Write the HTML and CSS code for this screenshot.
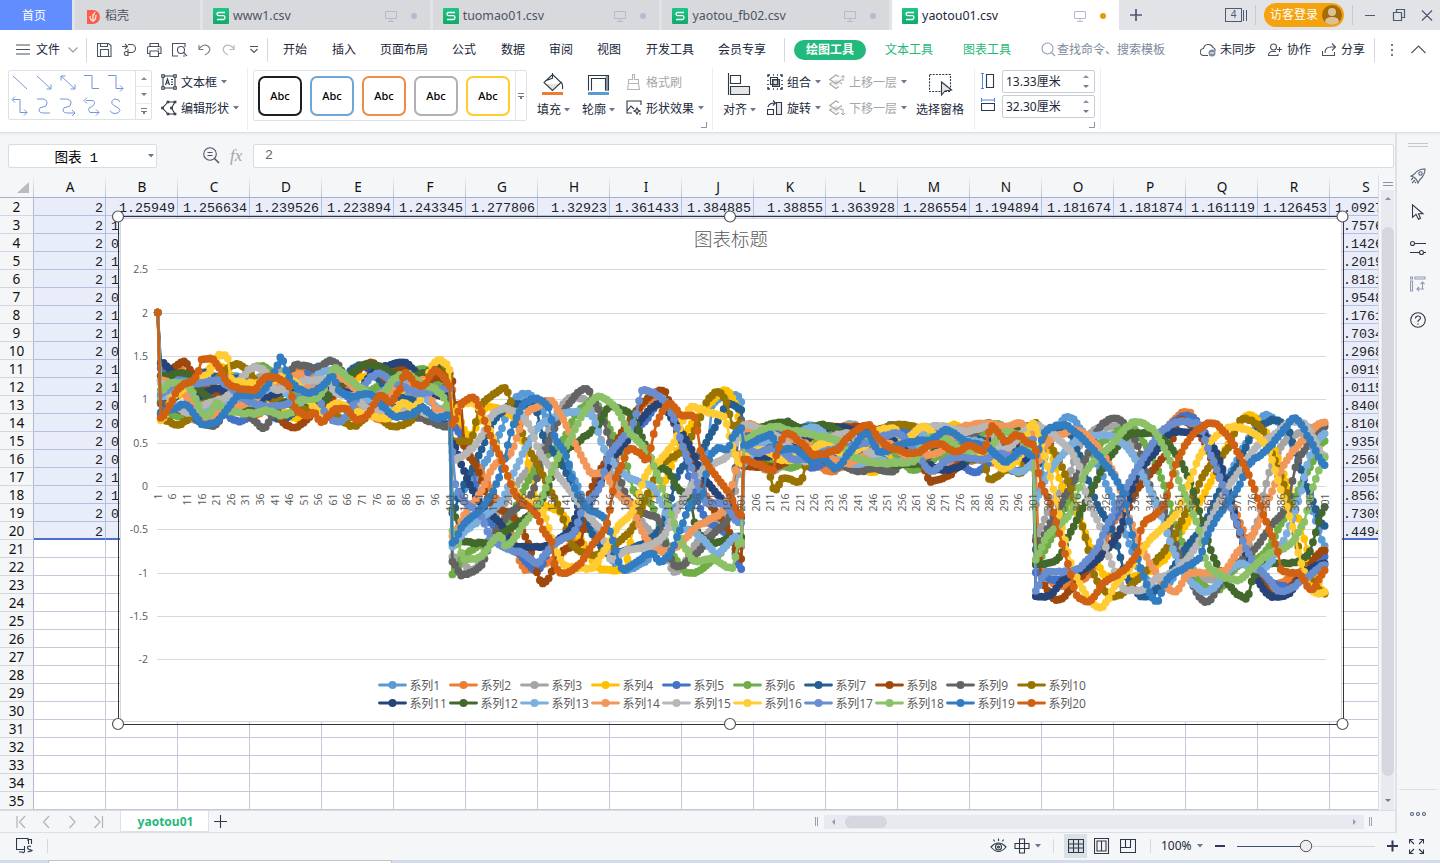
FILE: index.html
```html
<!DOCTYPE html>
<html lang="zh-CN">
<head>
<meta charset="utf-8">
<title>yaotou01.csv</title>
<link rel="stylesheet" href="styles.css">
</head>
<body>
<svg class="defs" width="0" height="0">
  <defs>
    <linearGradient id="g" x1="0" y1="0" x2="0" y2="1"><stop offset="0" stop-color="#1fc588"/><stop offset="1" stop-color="#12a968"/></linearGradient>
    <symbol id="sheet" viewBox="0 0 16 16"><rect width="16" height="16" rx="1" fill="url(#g)"/><path d="M12 4.500H5.500Q4 4.500 4 6t1.500 1.700h5Q12 7.800 12 9.500T10.500 11.500H4" fill="none" stroke="#fff" stroke-width="1.300"/></symbol>
    <symbol id="screen" viewBox="0 0 12 12"><path d="M.5 1.500h11v7H.5zM6 8.500v3M3 11.500h6" fill="none" stroke="#b4bbcf"/></symbol>
    <symbol id="down" viewBox="0 0 6 4"><path d="M0 0h6L3 3.500z" fill="#6b778e"/></symbol>
    <symbol id="layers" viewBox="0 0 16 16"><path d="M7 5.500l5 3L7 12 2 8.500z" fill="#e2e2e2"/><path d="M10 2.800L7 1 .8 5.500 7 9.500l6-4M2.500 8.500L.8 10 7 14.500l3-2M11.500 8.500L13 10" fill="none" stroke="#a9a9a9" stroke-width="1.200"/></symbol>
  </defs>
</svg>

<header class="tabbar">
  <div class="tab home">首页</div>
  <div class="tab shell"><svg width="13" height="15" viewBox="0 0 13 15"><path d="M0 1h6a6.500 6.500 0 0 1 0 14H0z" fill="#f9604c"/><path d="M6 13V5M6 12C3 11 3 9 3 7M6 12c3-1 3-4 3-6M6 7l2-4" stroke="#ffe5de" stroke-width="1.300" fill="none"/></svg>稻壳</div>
  <div class="tab doc"><svg class="s16"><use href="#sheet"/></svg><span>www1.csv</span><svg class="s12"><use href="#screen"/></svg><i class="dot"></i></div>
  <div class="tab doc"><svg class="s16"><use href="#sheet"/></svg><span>tuomao01.csv</span><svg class="s12"><use href="#screen"/></svg><i class="dot"></i></div>
  <div class="tab doc"><svg class="s16"><use href="#sheet"/></svg><span>yaotou_fb02.csv</span><svg class="s12"><use href="#screen"/></svg><i class="dot"></i></div>
  <div class="tab doc active"><svg class="s16"><use href="#sheet"/></svg><span>yaotou01.csv</span><svg class="s12"><use href="#screen"/></svg><i class="dot"></i></div>
  <svg class="newtab" width="12" height="12" viewBox="0 0 12 12"><path d="M6 0v12M0 6h12" stroke="#4d5a75" stroke-width="1.700"/></svg>
  <div class="winctl">
    <div class="count">4</div><i class="bars"></i><i class="vsep"></i>
    <div class="login"><span>访客登录</span><svg width="20" height="20" viewBox="0 0 20 20"><circle cx="10" cy="10" r="10" fill="#a36b09"/><circle cx="10" cy="7" r="4" fill="#dcc193"/><path d="M3 17q0-5 7-5t7 5q-3 3-7 3t-7-3z" fill="#dcc193"/></svg></div><i class="vsep"></i>
    <svg width="70" height="14" viewBox="0 0 70 14" fill="none" stroke="#4d5a75" stroke-width="1.200"><path d="M0 7.500h10M28.500 4.500h8v8h-8zM31.500 4.500v-3h8v8h-3M57 2.500l10 10M67 2.500l-10 10"/></svg>
  </div>
</header>

<nav class="menu">
  <svg width="14" height="11" viewBox="0 0 14 11" class="ic"><path d="M0 1h14M0 5.500h14M0 10h14"/></svg>
  <span>文件</span>
  <svg width="10" height="6" viewBox="0 0 10 6" class="ic lt"><path d="M.5.5L5 5 9.500.5"/></svg>
  <i class="vsep"></i>
  <svg width="15" height="14" viewBox="0 0 15 14" class="ic"><path d="M.5.500h11l2.500 2v11H.500zM3.500.500v3h7v-3M3.500 13.500v-7h8v7"/></svg>
  <svg width="15" height="14" viewBox="0 0 15 14" class="ic"><path d="M0 3.500h5M3 1l2.500 2.500L3 6M6 1.500h3.500a4 4 0 0 1 0 8H6M6 9.500a2 2 0 1 0-2 3h2V6"/></svg>
  <svg width="15" height="14" viewBox="0 0 15 14" class="ic"><path d="M3 3.500v-3h8.500v3M3 10.500H.5V5Q.5 3.500 2 3.500h10.500Q14 3.500 14 5v5.500h-2.500M3 8h8.500v5.500H3zM10.500 6h2"/></svg>
  <svg width="16" height="14" viewBox="0 0 16 14" class="ic"><path d="M6 13H.5V.5H13V4"/><circle cx="9" cy="7" r="3.500"/><path d="M11.500 9.500l3.500 3.500M11 13h2"/></svg>
  <svg width="13" height="12" viewBox="0 0 13 12" class="ic md"><path d="M1 1v4.500h4.500M1 5C4 1 8 0 10.500 2.500s1.500 6-3.500 8.500"/></svg>
  <svg width="13" height="12" viewBox="0 0 13 12" class="ic vl"><path d="M12 1v4.500H7.500M12 5C9 1 5 0 2.500 2.500S1 8.500 6 11"/></svg>
  <svg width="9" height="8" viewBox="0 0 9 8" class="ic"><path d="M1 .5h8M1.500 3L5 6.500 8.500 3"/></svg>
  <i class="vsep"></i>
  <span>开始</span><span>插入</span><span>页面布局</span><span>公式</span><span>数据</span><span>审阅</span><span>视图</span><span>开发工具</span><span>会员专享</span>
  <i class="vsep"></i>
  <span class="pill">绘图工具</span><span class="green">文本工具</span><span class="green">图表工具</span>
  <svg width="15" height="15" viewBox="0 0 15 15" class="ic gr"><circle cx="6.500" cy="6.500" r="5.500"/><path d="M10.500 10.500L14 14"/></svg>
  <span class="hint">查找命令、搜索模板</span>
  <svg width="17" height="14" viewBox="0 0 17 14" class="ic"><path d="M8 12.500H4A3.500 3.500 0 0 1 3.500 5.500 5 5 0 0 1 13 4.500 3 3 0 0 1 15 8"/><circle cx="12" cy="10" r="3.500" fill="#7f8ba3" stroke="none"/><path d="M10 10h4" stroke="#fff"/></svg>
  <span>未同步</span>
  <svg width="15" height="14" viewBox="0 0 15 14" class="ic"><circle cx="5.500" cy="4" r="3"/><path d="M8 8.500H3.500Q.5 9 .5 12.500h9.500V11M9 6.500h5M11.500 4v5"/></svg>
  <span>协作</span>
  <svg width="15" height="14" viewBox="0 0 15 14" class="ic"><path d="M.5 8v4.500h12V9M3 10Q3 4 9 4h4M10 .5L13.500 4 10 7.500"/></svg>
  <span>分享</span>
  <i class="vsep"></i>
  <svg width="4" height="14" viewBox="0 0 4 14"><path d="M1 1h2v2H1zM1 6h2v2H1zM1 11h2v2H1z" fill="#6f7785"/></svg>
  <svg width="15" height="9" viewBox="0 0 15 9" class="ic"><path d="M.5 8L7.500 1l7 7"/></svg>
</nav>

<section class="ribbon">
  <div class="shapes">
    <svg width="126" height="48" viewBox="0 0 126 48" fill="none" stroke="#7396d8">
      <path d="M4 5l14 13M28 5l14 13M42 13.500V18h-4.500M52 5l14 13M52 9.500V5h4.500M66 13.500V18h-4.500M75 4.500h8v13h7M99 4.500h8v13h7M111 14.500l3 3-3 3M4 28.500h7v13h7M6 25.500l-3 3 3 3M15 38.500l3 3-3 3M28 28h5q5 0 5 4t-4 4-4 3 5 3h6M51 28h5q6 0 6 4t-4 4-4 3 5 3h7M63 39l3 3-3 3M77 29.500h5q5 0 3 4-1 2-4 3t0 5h9M78 26.500l-3 3 3 3M87 38.500l3 3-3 3M111 31q-1-3-5-3-4 1-3 4.500 1 2 4 3 4 2 4 4-1 3-5 3t-5-3"/>
    </svg>
    <div class="spin3"><i><b class="up"></b></i><i><b class="dn"></b></i><i><b class="dn bar"></b></i></div>
  </div>
  <div class="pair">
    <div><svg width="16" height="16" viewBox="0 0 16 16" class="ic dk"><path d="M2 2h12v12H2z"/><path d="M4.500 11L6.500 5l2 6M5 9h3M10 5.500h2M10 8h2M10 10.500h2"/><path d="M.8.800h2.400v2.400H.8zM12.800.800h2.400v2.400h-2.400zM.8 12.800h2.400v2.400H.8zM12.800 12.800h2.400v2.400h-2.400z" fill="#fff"/></svg><span>文本框</span><svg class="dd"><use href="#down"/></svg></div>
    <div><svg width="16" height="16" viewBox="0 0 16 16" class="ic dk"><path d="M7 2h7l-3.500 6 3.500 6H7L1.500 8z"/><path d="M6.200 1.200h1.600v1.600H6.200zM13.200 1.200h1.600v1.600h-1.600zM.7 7.200h1.600v1.600H.7zM9.700 7.200h1.600v1.600H9.700zM6.200 13.200h1.600v1.600H6.200zM13.200 13.200h1.600v1.600h-1.600z" fill="#fff"/></svg><span>编辑形状</span><svg class="dd"><use href="#down"/></svg></div>
  </div>
  <i class="gsep"></i>
  <div class="styles">
    <b class="k1">Abc</b><b class="k2">Abc</b><b class="k3">Abc</b><b class="k4">Abc</b><b class="k5">Abc</b>
    <div class="more"><i class="dn bar"></i></div>
  </div>
  <div class="big"><svg width="24" height="25" viewBox="0 0 24 25" class="ic dk"><path d="M4 12h15l-8 7z" fill="#e3e3e3" stroke="none"/><path d="M11.500 2.500l8.500 8-8.500 8-8.500-8zM11.500 1v5M4 9l8-3M20 10q2 2 1.500 7"/><path d="M1 21.500h21" stroke="#ee7c30" stroke-width="3"/></svg><span>填充<svg class="dd"><use href="#down"/></svg></span></div>
  <div class="big"><svg width="24" height="25" viewBox="0 0 24 25" class="ic dk"><path d="M19.500 3h3v16h-3z" fill="#9097a8" stroke="none"/><path d="M2.500 18.500v-15h20v15M5.500 18.500v-12h14v12"/><path d="M2 21.500h21" stroke="#5b9bd5" stroke-width="3"/></svg><span>轮廓<svg class="dd"><use href="#down"/></svg></span></div>
  <div class="pair">
    <div class="off"><svg width="16" height="16" viewBox="0 0 16 16" class="ic vl"><path d="M6.500.5h2v5h4v4H2.500v-4h4zM2.500 9.500L1.500 15.500h12l-1-6"/></svg><span>格式刷</span></div>
    <div><svg width="16" height="16" viewBox="0 0 16 16" class="ic dk"><path d="M15 5V1H1v12h5M1 11l4-5 3 3"/><path d="M11 8l1 2 2 1-2 1-1 2-1-2-2-1 2-1zM14 13v2"/></svg><span>形状效果</span><svg class="dd"><use href="#down"/></svg></div>
    <svg class="corner" width="6" height="6"><path d="M0 5.500h5.500V0" fill="none" stroke="#8c94a4"/></svg>
  </div>
  <i class="gsep"></i>
  <div class="big"><svg width="24" height="25" viewBox="0 0 24 25" class="ic dk"><path d="M1.500 1v22M3.500 3.500h10v8h-10z"/><path d="M3.500 14.500h19v8h-19z" fill="#e6e6e6"/></svg><span>对齐<svg class="dd"><use href="#down"/></svg></span></div>
  <div class="pair">
    <div><svg width="16" height="16" viewBox="0 0 16 16" class="ic dk"><path d="M6 6h5v5H6z" fill="#dedede"/><path d="M3.500 3.500h7v7h-7zM5.500 5.500h7v7h-7z"/><path d="M1 3V1h2M13 1h2v2M15 13v2h-2M3 15H1v-2M6 1h1M10 1h1M1 6v1M1 10v1M15 6v1M15 10v1M6 15h1M10 15h1" stroke-width="1.500"/></svg><span>组合</span><svg class="dd"><use href="#down"/></svg></div>
    <div><svg width="16" height="16" viewBox="0 0 16 16" class="ic dk"><path d="M9.500 2.500h5v12h-5z" fill="#e6e6e6"/><path d="M.5 9.500h6v5h-6zM1 7Q2 3 8 3M6 .5L8.500 3 6 5.500"/></svg><span>旋转</span><svg class="dd"><use href="#down"/></svg></div>
  </div>
  <div class="pair off">
    <div><svg width="16" height="16"><use href="#layers"/><path d="M14 7V1.500M12 3.500l2-2 2 2" stroke="#a9a9a9" fill="none"/></svg><span>上移一层</span><svg class="dd"><use href="#down"/></svg></div>
    <div><svg width="16" height="16"><use href="#layers"/><path d="M14 9v6M12 13l2 2 2-2" stroke="#a9a9a9" fill="none"/></svg><span>下移一层</span><svg class="dd"><use href="#down"/></svg></div>
  </div>
  <div class="big sel"><svg width="24" height="25" viewBox="0 0 24 25" class="ic dk"><path d="M.5 2.500h21v17H.500z" stroke-dasharray="2 1.200"/><path d="M12.500 10v13l3.500-4 6.500-1z" fill="#e6e6e6"/></svg><span>选择窗格</span></div>
  <i class="gsep"></i>
  <div class="sizes">
    <svg width="14" height="16" viewBox="0 0 14 16"><path d="M1.500 1v14M0 .5h3M0 15.500h3" stroke="#4a86f0" fill="none"/><path d="M5.500 1.500h7v13h-7z" class="ic dk"/></svg>
    <svg width="14" height="14" viewBox="0 0 14 14"><path d="M0 2h14M.5 0v4M13.500 0v4" stroke="#4a86f0" fill="none"/><path d="M.5 5.500h13v7H.500z" class="ic dk"/></svg>
  </div>
  <div class="inputs">
    <div>13.33厘米<span><b class="up"></b><b class="dn"></b></span></div>
    <div>32.30厘米<span><b class="up"></b><b class="dn"></b></span></div>
    <svg class="corner" width="6" height="6"><path d="M0 5.500h5.500V0" fill="none" stroke="#8c94a4"/></svg>
  </div>
  <i class="gsep"></i>
</section>

<div class="work">
  <main>
    <div class="fbar">
      <div class="name"><span>图表 1</span><svg class="dd"><use href="#down"/></svg></div>
      <svg width="17" height="17" viewBox="0 0 17 17" class="ic"><circle cx="7" cy="7" r="6.300"/><path d="M11.500 11.500L16 16" stroke-width="1.500"/><path d="M4.500 5.500h5M4.500 8.500h5"/></svg>
      <em>fx</em>
      <div class="formula">2</div>
    </div>
    <div class="sheetwrap">
      <div class="sheet" id="sheetgrid"></div>
      <div class="vscroll"><i class="split"></i><div class="track"><b class="up"></b><i class="thumb"></i><b class="dn"></b></div></div>
      <svg class="chart" id="chart" width="1240" height="522" viewBox="110 208 1240 522"></svg>
    </div>
    <div class="tabs">
      <svg width="90" height="14" viewBox="0 0 90 14" fill="none" stroke="#b0b3b9" stroke-width="1.200"><path d="M1 1v12M9 1L3.500 7 9 13M33 1l-5.500 6L33 13M53.500 1L59 7l-5.500 6M78.500 1L84 7l-5.500 6M86.500 1v12"/></svg>
      <div class="stab">yaotou01</div>
      <svg width="13" height="13" viewBox="0 0 13 13" class="ic dk"><path d="M6.500 0v13M0 6.500h13"/></svg>
      <i class="grip"></i>
      <div class="htrack"><b class="lf"></b><i></i><b class="rt"></b></div>
      <i class="grip"></i>
    </div>
  </main>
  <aside>
    <svg width="20" height="4" viewBox="0 0 20 4"><path d="M0 .5h20M0 3.500h20" stroke="#c5c7cd"/></svg>
    <svg width="16" height="16" viewBox="0 0 16 16" class="ic sl"><path d="M4 6.500Q8 .8 15 1q0 6.500-5.500 11L8 15 6.500 11.500 4.500 9.500 1 8zM1 12l2-2M2 15l3-3M5 15l1-1"/><circle cx="10.500" cy="5.500" r="1.700"/></svg>
    <svg width="14" height="16" viewBox="0 0 14 16" class="ic dk"><path d="M1.500.8v12.500l3.500-3 2.500 5 2-1-2-4.500H12z"/></svg>
    <svg width="16" height="16" viewBox="0 0 16 16" class="ic dk"><circle cx="2.500" cy="3.500" r="2"/><circle cx="11.500" cy="12.500" r="2"/><path d="M4.500 3.500H16M0 12.500h9.500M13.500 12.500H16"/></svg>
    <svg width="16" height="16" viewBox="0 0 16 16" class="ic gr"><path d="M.5 1h2v2h-2zM5 1h10v2H5zM.5 5h2v10h-2zM12.500 13V6M10.500 8l2-2 2 2M14 13H7M9 11l-2 2 2 2"/></svg>
    <svg width="16" height="16" viewBox="0 0 16 16" class="ic dk"><circle cx="8" cy="8" r="7.300"/><path d="M5.500 6.500Q5.500 4 8 4t2.500 2Q10.500 7 9 8t-1 2M8 11.500v1.200"/></svg>
    <hr>
    <svg width="18" height="6" viewBox="0 0 18 6" class="ic sl"><circle cx="3" cy="3" r="1.500"/><circle cx="9" cy="3" r="1.500"/><circle cx="15" cy="3" r="1.500"/></svg>
  </aside>
</div>

<footer class="status">
  <svg width="17" height="16" viewBox="0 0 17 16" class="ic dk"><path d="M8 11.500H.500v-11H12V3M3 14h4M12.500 6V1.500h3V6M8.500 8v5q0 2-2 1.500M15 8.500q-3.500-1-3.500 1t3.500 2.500-3.500 2"/></svg>
  <i class="vsep"></i>
  <svg width="17" height="16" viewBox="0 0 17 16" class="ic dk"><path d="M1 9Q8.500 1 16 9q-7.500 9-15 0zM8.500.5V3M3.500 1.500l1 2M13.500 1.500l-1 2"/><circle cx="8.500" cy="9" r="3"/><circle cx="8.500" cy="9" r="1"/></svg>
  <svg width="16" height="16" viewBox="0 0 16 16" class="ic dk"><path d="M5.500 1h5v4.500H15v5h-4.500V15h-5v-4.500H1v-5h4.500zM5.500 5.500h5v5h-5z"/></svg>
  <svg class="dd"><use href="#down"/></svg>
  <i class="vsep"></i>
  <div class="cur"><svg width="16" height="16" viewBox="0 0 16 16" class="ic dk"><path d="M.5 1.500h15v13H.500zM.5 6h15M.5 10h15M5.500 1.500v13M10.500 1.500v13"/></svg></div>
  <svg width="16" height="16" viewBox="0 0 16 16" class="ic dk"><path d="M.5.500h14v15H.500zM3 3h9v10H3zM7.500 3v10"/></svg>
  <svg width="16" height="16" viewBox="0 0 16 16" class="ic dk"><path d="M.5 1.500h15v13H.500zM.5 9.500h10v-8M5.500 1.500v8"/></svg>
  <i class="vsep"></i>
  <span>100%</span>
  <svg class="dd"><use href="#down"/></svg>
  <svg width="11" height="12" viewBox="0 0 11 12"><path d="M0 6h10" stroke="#2e3b57" stroke-width="2"/></svg>
  <svg width="138" height="14" viewBox="0 0 138 14"><path d="M0 7.500h69" stroke="#3f4f72"/><path d="M69 7.500h69" stroke="#d2d5db"/><circle cx="69" cy="7" r="5.700" fill="#eee" stroke="#565656"/></svg>
  <svg width="11" height="12" viewBox="0 0 11 12"><path d="M0 6h11M5.500.5v11" stroke="#2e3b57" stroke-width="2"/></svg>
  <svg width="15" height="15" viewBox="0 0 15 15" class="ic dk"><path d="M.5 4.500v-4h4M.5.5L5 5M10.500.500h4v4M14.500.5L10 5M.5 10.500v4h4M.5 14.500L5 10M14.500 10.500v4h-4M14.500 14.500L10 10"/></svg>
</footer>
<div class="desk"><i></i></div>
<script src="chart.js"></script>
</body>
</html>
```

FILE: styles.css
```css
* { box-sizing: border-box; }
body {
  margin: 0; width: 1440px; height: 863px; overflow: hidden;
  display: flex; flex-direction: column; background: #fff; color: #20283a;
  font: 12px/16px "Noto Sans", "Noto Sans CJK SC", sans-serif;
}
svg { display: block; flex: none; }
i, b, em { flex: none; }
.defs { height: 0; position: absolute; }
.ic { fill: none; stroke: #4b5362; stroke-width: 1.1; }
.ic.dk { stroke: #2f3848; }
.ic.lt { stroke: #9098a5; }
.ic.md { stroke: #747b87; }
.ic.vl { stroke: #b3b5b9; }
.ic.gr { stroke: #939db2; }
.ic.sl { stroke: #56627c; }
.dd { width: 6px; height: 4px; }
.vsep { width: 1px; background: #d5d8de; }
.up, .dn, .lf, .rt { width: 0; height: 0; border: 3px solid transparent; display: block; }
.up { border-bottom-color: #8790a5; border-top: 0; }
.dn { border-top-color: #707b90; border-bottom: 0; }
.lf { border-right-color: #8d9ab8; border-left: 0; }
.rt { border-left-color: #8d9ab8; border-right: 0; }
.dn.bar { width: 6px; height: 6px; border: 0; background: linear-gradient(#707b90, #707b90) 0 0/6px 1px no-repeat, linear-gradient(#707b90, #707b90) 0 3px/6px 1px no-repeat, linear-gradient(#707b90, #707b90) 2px 4px/2px 2px no-repeat; }

/* window tabs */
.tabbar { display: flex; height: 30px; background: #e2e3e7; gap: 3px; align-items: stretch; flex: none; }
.tab { background: #d8d9dd; display: flex; align-items: center; color: #4c5464; height: 30px; padding-top: 2px; }
.tab.home { width: 72px; background: #618dff; color: #fff; justify-content: center; padding-right: 4px; }
.tab.shell { width: 125px; padding-left: 12px; gap: 5px; }
.tab.doc { width: 226.700px; padding: 2px 13px 0 10px; font-size: 12.4px; }
.tab.doc span { margin-left: 4px; margin-right: auto; }
.tab.doc .s12 { margin-right: 14px; }
.tab.active { background: #fff; color: #20283a; }
.s16 { width: 16px; height: 16px; }
.s12 { width: 12px; height: 12px; }
.dot { width: 6px; height: 6px; border-radius: 3px; background: #b4bbd0; }
.active .dot { background: #e79a08; }
.newtab { margin: 9px 0 0 8px; }
.winctl { margin-left: auto; display: flex; align-items: center; padding-right: 5px; }
.winctl .vsep { height: 20px; background: #c7cad0; }
.count { width: 17px; height: 14px; border: 1.5px solid #4d5a75; font-size: 10px; line-height: 11px; text-align: center; color: #4d5a75; }
.bars { width: 4px; height: 11px; border: solid #4d5a75; border-width: 0 1px; margin: 0 8px 0 1px; }
.login { display: flex; align-items: center; gap: 4px; background: #f4a20d; color: #fff; height: 24px; border-radius: 12px; padding: 0 2px 0 6px; width: 80px; margin: 0 8px; white-space: nowrap; }
.winctl > svg { margin-left: 12px; }

/* menu row */
.menu {
  display: grid; align-items: center; height: 38px; padding: 1px 0 0 16px; flex: none; white-space: nowrap;
  grid-template-columns: 20px 32px 18px 11px 25px 25px 25px 26px 24px 27px 18px 16px 49px 48px 72px 49px 48px 48px 49px 72px 66px 10px 91px 78px 78px 16px 143px 20px 48px 19px 35px 19px 33px 16px 21px 29px;
}
.menu .vsep { height: 24px; }
.menu span:not(.pill) { padding-top: 1px; }
.green { color: #1fb87b; }
.pill { background: #21b97c; color: #fff; width: 72px; height: 20px; line-height: 20px; border-radius: 10px; text-align: center; font-weight: 700; }
.menu .hint { color: #7e889c; padding-top: 0; }

/* ribbon */
.ribbon {
  display: grid; height: 64px; padding-left: 8px; flex: none; white-space: nowrap;
  grid-template-columns: 153px 86px 6px 284px 45px 44px 86px 11px 44px 62px 87px 58px 7px 21px 98px 6px;
}
.gsep { width: 1px; background: #eceef1; height: 62px; }
.shapes { width: 144px; height: 50px; margin-top: 2px; border: 1px solid #dfe1e6; border-radius: 2px; display: flex; }
.spin3 { margin-left: auto; width: 16px; border-left: 1px solid #dfe1e6; display: flex; flex-direction: column; }
.spin3 i { flex: 1; display: flex; align-items: center; justify-content: center; }
.spin3 i + i { border-top: 1px solid #e8eaee; }
.pair { display: flex; flex-direction: column; gap: 10px; padding-top: 6px; position: relative; }
.pair > div { display: flex; align-items: center; gap: 4px; height: 16px; }
.pair span { padding-top: 2px; }
.off { color: #a4a6aa; }
.corner { position: absolute; right: 5px; bottom: 4px; }
.styles { width: 274px; height: 51px; margin-top: 2px; border: 1px solid #dfe1e6; border-radius: 2px; display: flex; align-items: center; gap: 8px; padding-left: 4px; }
.styles > b { width: 44px; height: 40px; border: 2px solid; border-radius: 7px; display: flex; align-items: center; justify-content: center; background: #fff; font-weight: 500; font-size: 11px; color: #000; }
.styles .k1 { border-color: #1e1f22; }
.styles .k2 { border-color: #6ea6da; }
.styles .k3 { border-color: #ef8c4b; }
.styles .k4 { border-color: #b0b0b0; }
.styles .k5 { border-color: #ffcb2e; }
.more { align-self: stretch; border-left: 1px solid #e3e5e9; margin-left: -3px; width: 13px; display: flex; align-items: center; justify-content: center; }
.big { display: flex; flex-direction: column; padding-top: 4px; }
.big > svg { margin-left: 4px; }
.big.sel > svg { margin-left: 13px; }
.big span { display: flex; align-items: center; gap: 3px; margin-top: 5px; }
.sizes { display: flex; flex-direction: column; gap: 9px; padding-top: 5px; }
.inputs { display: flex; flex-direction: column; gap: 2px; padding-top: 2px; position: relative; }
.inputs > div { width: 93px; height: 23px; border: 1px solid #c9ccd4; border-radius: 2px; padding: 0 5px 0 3px; display: flex; align-items: center; justify-content: space-between; }
.inputs span { display: flex; flex-direction: column; gap: 7px; }

/* work area */
.work { display: flex; height: 701px; flex: none; background: #f5f6f8; box-shadow: inset 0 3px 3px -2px #d4d6da; }
main { width: 1395px; display: flex; flex-direction: column; }
.fbar { height: 43px; display: flex; align-items: center; padding: 4px 1px 0 8px; }
.name, .formula { background: #fff; border: 1px solid #d9dce1; border-radius: 2px; height: 24px; display: flex; align-items: center; }
.name { width: 149px; justify-content: flex-end; padding-right: 2px; font: 14px "Liberation Mono", "Noto Sans CJK SC", monospace; color: #000; margin-right: 46px; }
.name span { margin-right: 50px; font-size: 13.6px; }
.fbar em { font: italic 17px/20px "Liberation Serif", serif; color: #a5a5a5; width: 23px; margin-left: 10px; }
.formula { flex: 1; padding-left: 11px; font: 13.33px "Liberation Mono", monospace; color: #666; }
.sheetwrap { height: 635px; display: flex; position: relative; }
.sheet { width: 1379px; overflow: hidden; border-right: 1px solid #dcdde6; }
.row { display: flex; width: 1402px; height: 18px; }
.row > * { width: 72px; flex: none; border: solid #c3c9db; border-width: 0 1px 1px 0; text-align: right; padding-right: 2px; }
.row > .rh { width: 34px; border-color: #b3b8cc; background: #f5f6f8; text-align: center; padding: 0; font: 13.6px/18px "Noto Sans", sans-serif; color: #111; border-bottom-color: #d4d6de; }
.row > .c { background: #fff; font: 13.33px/21px "Liberation Mono", monospace; color: #222; white-space: pre; }
.row.on > .c { background: #e9edfa; border-color: #b5c0df; }
.row.end > .c { border-bottom: 2px solid #4a70cf; }
.row.head { height: 23px; }
.row.head > * { font: 13.6px/23px "Noto Sans", sans-serif; text-align: center; padding: 0; color: #111; border-bottom-color: #a5b0ca; border-right: 0; background: linear-gradient(#f5f6f8, #bfc3cf) right/1px 100% no-repeat; }
.row.head > .all { width: 34px; display: flex; align-items: flex-end; justify-content: flex-end; padding: 0 5px 4px 0; }
.vscroll { width: 16px; padding: 7px 2px 0; }
.split { display: block; width: 10px; height: 4px; border: solid #8b93a8; border-width: 1px 0; margin: 0 0 4px 2px; }
.track { height: 620px; width: 13px; background: #e9eaef; display: flex; flex-direction: column; align-items: center; padding: 7px 0; }
.thumb { width: 12px; height: 549px; background: #d4d7dd; border-radius: 6px; margin: 27px 0 23px; }
.chart { position: absolute; left: 110px; top: 33px; overflow: visible; }
.chart text { font-family: "Open Sans", "Noto Sans CJK SC", sans-serif; fill: #595959; }
.chart .title { font-size: 18.5px; font-weight: 300; text-anchor: middle; font-family: "Noto Sans CJK SC", sans-serif; }
.chart .val { font-size: 10.5px; text-anchor: end; }
.chart .leg { font-size: 12px; letter-spacing: -.15px; }

/* sheet tabs */
.tabs { height: 23px; border-top: 1px solid #d9dbe5; border-bottom: 1px solid #dddfe6; display: flex; align-items: center; padding-left: 15px; }
.tabs > svg:first-child { margin-left: 1px; }
.stab { width: 89px; height: 21px; margin: -1px 5px 0 14px; background: #fff; border: 1px solid #e0e1e8; border-top: 0; color: #1fb87b; font-weight: 700; text-align: center; line-height: 21px; padding-left: 2px; }
.grip { width: 3px; height: 9px; border: solid #9aa1b3; border-width: 0 1px; }
.tabs .grip { margin-left: 588px; }
.htrack { width: 540px; height: 14px; background: #e9eaef; margin-left: 6px; display: flex; align-items: center; padding: 0 8px; }
.htrack i { width: 42px; height: 12px; background: #d4d7dd; border-radius: 6px; margin: 0 auto 0 10px; }
.tabs .htrack + .grip { margin-left: 5px; }

/* right rail */
aside { width: 45px; border-left: 2px solid #dfe0e8; display: flex; flex-direction: column; align-items: center; padding: 11px 2px 0 0; }
aside svg { margin-bottom: 20px; }
aside svg:first-child { margin-bottom: 21px; }
aside hr { width: 38px; border: 0; border-top: 1px solid #dcdee3; margin: auto 0 21px; }
aside svg:last-child { margin-bottom: 16px; }

/* status bar */
.status {
  height: 27px; flex: none; background: #f5f6f8; display: grid; align-items: center; padding: 0 0 1px 16px;
  grid-template-columns: 31px 943px 24px 21px 18px 11px 30px 26px 30px 11px 36px 18px 22px 150px 22px 31px;
}
.status .vsep { height: 14px; }
.status span { font-size: 12px; }
.cur { width: 23px; height: 24px; background: #dbe0e7; display: flex; align-items: center; justify-content: center; }
.desk { height: 3px; background: #d3dcea; padding-left: 48px; }
.desk i { display: block; width: 344px; height: 3px; background: #fff; border: 1px solid #c4c4c4; border-bottom: 0; }
```

FILE: chart.js
```js
// ---------- worksheet ----------
const cols = 'ABCDEFGHIJKLMNOPQRS'.split('');
const first = ['2', '1.25949', '1.256634', '1.239526', '1.223894', '1.243345', '1.277806', '1.32923', '1.361433', '1.384885',
  '1.38855', '1.363928', '1.286554', '1.194894', '1.181674', '1.181874', '1.161119', '1.126453', '1.092704'];
const leadB = '10110110110000110';
const tailS = '7576 1426 2019 8181 9548 1761 7034 2968 0919 0115 8400 8106 9356 2568 2056 8563 7309 4494'.split(' ');
let out = '<div class="row head"><div class="all"><svg width="12" height="11"><path d="M12 0v11H0z" fill="#b9bbc0"/></svg></div>' +
  cols.map(c => `<div>${c}</div>`).join('') + '</div>';
for (let r = 2; r <= 35; r++) {
  const on = r <= 20;
  out += `<div class="row${on ? ' on' : ''}${r === 20 ? ' end' : ''}"><div class="rh">${r}</div>`;
  cols.forEach((c, k) => {
    let v = '';
    if (r === 2) v = first[k];
    else if (on && k === 0) v = '2';
    else if (on && k === 1 && r < 20) v = leadB[r - 3] + '       ';
    else if (on && k === 18) v = ' .' + tailS[r - 3] + '00';
    out += `<div class="c">${v}</div>`;
  });
  out += '</div>';
}
document.getElementById('sheetgrid').innerHTML = out;

// ---------- chart ----------
const colors = ['#5b9bd5', '#ed7d31', '#a5a5a5', '#ffc000', '#4472c4', '#70ad47', '#255e91', '#9e480e', '#636363', '#997300',
  '#264478', '#43682b', '#7cafdd', '#f1975a', '#b7b7b7', '#ffcd33', '#698ed0', '#8cc168', '#327dc2', '#d26012'];
// Each stage covers 100 samples; knots are thirds of a pixel from the stage origin.
const stages = [
  { ox: 120, oy: 330, a: 2, knots: {
    8: '122,150 190,95 225,140 300,190 380,170 460,210 490,280 525,292 580,250 640,200 700,130 760,98 800,150 850,110 920,150 990,130',
    9: '122,220 200,250 280,290 330,220 400,270 430,295 480,200 530,105 550,105 590,115 635,92 700,170 780,210 860,250 920,270 990,290',
    10: '122,265 170,285 230,240 290,150 350,102 380,120 440,190 540,230 620,240 700,288 760,250 820,290 870,275 920,150 960,110 990,140',
    11: '122,98 160,130 230,200 290,175 350,210 440,200 530,170 620,170 700,190 770,120 850,98 890,130 930,190 990,200',
    12: '122,140 190,130 250,190 330,240 430,240 520,210 600,220 650,170 700,125 740,102 780,110 850,140 910,130 950,110 990,180',
    13: '122,200 190,180 260,240 340,210 410,190 470,170 540,220 600,130 640,120 700,170 760,210 830,150 910,200 990,250',
    14: '122,150 180,180 260,265 300,250 350,230 400,210 450,160 500,150 540,130 570,180 650,140 690,160 740,240 800,190 860,170 910,150 950,240 990,250',
    15: '122,160 160,220 210,250 260,220 320,200 360,150 405,110 430,120 470,180 530,160 570,150 620,150 650,190 700,200 750,240 820,240 870,230 920,250 960,260 990,260',
    16: '122,270 160,200 200,170 265,130 298,75 320,78 335,150 390,160 450,155 490,140 530,160 570,215 605,250 650,220 700,240 750,258 800,265 850,220 880,232 905,200 930,120 955,90 985,110 992,125',
    17: '122,190 180,150 230,160 290,150 320,165 350,190 400,220 450,230 490,225 540,205 590,200 620,255 655,275 690,240 720,190 745,150 775,130 810,150 850,170 900,190 950,180 990,175',
    18: '122,182 150,160 190,160 220,190 245,245 262,258 290,220 330,245 400,250 440,242 480,255 520,245 540,210 590,205 625,150 645,115 680,140 730,180 780,200 820,150 860,130 900,160 940,175 970,200 990,245',
    19: '122,245 165,235 195,222 235,270 250,285 290,275 320,240 360,195 410,195 450,155 470,110 482,80 500,125 520,165 570,188 610,165 637,140 660,185 700,200 745,190 790,230 830,260 870,255 905,235 950,265 985,255',
    20: '122,262 150,225 175,175 230,140 245,90 270,85 295,110 325,160 345,172 400,180 440,140 500,158 530,240 560,255 585,250 602,278 650,235 675,235 710,270 740,258 785,195 810,215 840,175 855,128 885,160 905,170 945,120 975,145 990,170'
  }, mid: 190, amp: 66 },
  { ox: 430, oy: 370, a: 102, knots: {
    1: '66,380 170,270 210,190 250,90 290,70 330,110 380,220 430,320 500,480 580,600 650,570 710,430 780,380 835,220 845,110 880,80 920,75 933,95',
    2: '66,60 90,200 150,300 220,430 290,600 380,560 440,500 500,350 560,260 610,150 660,90 710,100 760,210 830,380 933,530',
    3: '66,560 130,600 200,440 270,330 330,250 380,130 430,80 480,100 510,200 560,340 640,460 700,540 735,605 800,520 880,440 920,350 933,250',
    4: '66,110 120,200 170,110 250,140 280,220 330,400 380,420 440,490 520,600 580,600 620,430 700,340 760,200 840,100 890,60 915,100 933,160',
    5: '66,170 120,260 150,400 200,480 260,540 320,600 370,520 430,490 490,380 560,220 640,160 690,100 740,180 780,330 830,450 900,500 933,595',
    6: '66,615 100,560 160,520 220,490 280,360 330,280 400,210 440,130 490,95 540,180 590,280 610,360 660,400 710,520 780,610 870,550 910,500 933,510',
    7: '66,430 90,370 150,250 200,140 250,105 310,100 340,200 400,290 440,400 480,480 540,550 620,530 680,490 710,430 750,300 800,260 850,180 900,100 933,120',
    8: '66,30 75,110 95,100 100,220 140,290 180,400 250,440 290,510 340,640 400,540 450,520 480,370 540,250 600,150 660,80 700,60 740,180 790,260 820,370 890,470 933,565',
    9: '66,575 95,615 150,590 190,500 240,430 300,380 350,230 410,110 470,55 490,90 520,150 560,290 590,380 640,430 680,440 710,530 740,590 790,560 850,490 900,440 933,150',
    10: '66,215 120,215 150,110 180,80 225,55 250,120 290,220 340,320 390,420 430,530 490,555 560,520 610,470 650,380 700,280 760,240 800,170 830,95 865,65 890,100 910,170 933,160',
    11: '66,220 100,300 150,400 220,470 260,530 340,530 410,490 450,420 490,380 540,280 600,200 640,140 690,100 730,150 780,230 820,320 870,380 933,440',
    12: '66,420 100,515 170,520 215,490 280,450 330,400 400,250 450,210 500,170 540,110 600,130 630,190 680,290 710,300 740,350 780,390 800,480 850,520 920,500 933,500',
    13: '66,530 100,490 160,440 210,400 250,310 290,230 330,165 370,145 420,125 480,130 520,230 560,290 610,330 660,345 700,410 720,470 780,480 830,520 860,550 920,500 933,520',
    14: '66,500 100,440 150,370 190,290 240,250 290,130 330,105 360,90 400,150 440,230 490,310 520,310 560,370 600,400 630,470 660,520 700,545 740,530 800,470 870,430 900,370 933,250',
    15: '66,270 120,240 160,190 190,130 220,115 265,130 300,170 330,250 370,300 420,360 470,430 510,480 545,570 590,540 650,530 700,500 730,440 770,370 820,300 890,260 933,200',
    16: '66,130 100,100 130,100 170,160 200,230 260,370 340,430 370,520 410,590 480,595 530,530 560,475 610,420 650,310 690,270 730,220 760,150 785,110 830,125 880,140 910,240 933,280',
    17: '66,240 75,340 110,400 150,430 180,500 240,540 280,550 320,580 350,545 380,515 430,490 460,410 510,350 535,260 570,215 610,160 640,60 690,80 730,140 755,220 800,330 830,400 880,400 930,460',
    18: '66,480 80,510 105,570 150,560 210,495 225,525 290,450 330,395 380,270 420,210 460,130 505,80 550,105 600,190 650,240 680,310 710,390 740,480 765,535 800,575 840,565 905,595 930,515',
    19: '66,520 100,465 150,420 180,380 215,300 250,165 290,95 320,85 355,110 375,200 410,260 440,370 480,420 520,440 545,500 580,600 620,575 665,550 690,575 720,550 750,480 785,400 820,370 835,270 865,235 890,240 910,200 933,175',
    20: '66,160 100,95 130,82 150,115 175,185 215,270 260,380 290,405 320,435 340,480 368,525 375,590 400,610 450,580 490,520 525,475 540,420 555,330 575,285 600,235 630,250 650,270 680,160 720,102 755,135 795,140 810,240 860,320 900,375 933,435'
  } },
  { ox: 730, oy: 390, a: 202, knots: {
    8: '42,230 130,230 300,110 400,110 480,160 580,230 600,275 660,255 700,200 800,150 908,180',
    9: '42,110 100,150 350,230 390,245 430,235 485,245 560,150 700,150 775,100 830,200 908,200',
    10: '42,190 110,230 135,300 160,265 210,275 240,190 400,130 520,105 600,130 700,170 760,210 780,270 840,235 870,250 908,130',
    11: '42,200 100,200 200,160 315,110 370,120 500,150 590,220 640,240 690,230 740,170 820,150 908,215',
    12: '42,180 100,110 170,95 210,115 280,105 340,130 420,180 500,225 560,220 650,170 720,210 780,170 840,110 908,110',
    14: '42,115 90,115 140,140 200,150 260,180 350,220 400,200 470,160 540,200 620,190 700,110 780,100 830,110 870,100 908,130',
    15: '42,105 100,120 170,160 230,215 290,150 350,130 430,190 500,170 590,110 640,110 710,125 770,110 820,180 908,110',
    16: '42,190 100,180 160,210 220,200 280,160 340,190 400,170 450,120 490,115 520,150 580,110 640,160 700,190 780,200 820,235 870,200 908,100',
    17: '42,170 80,190 130,175 200,210 300,180 400,160 500,130 560,190 605,245 650,210 700,200 760,210 800,190 850,200 908,150',
    18: '42,150 80,130 130,110 180,120 250,135 320,150 370,200 460,220 550,215 600,140 650,150 700,180 770,180 820,125 870,140 908,190',
    19: '42,165 120,135 150,180 190,175 250,215 280,205 315,235 360,185 410,130 450,185 540,155 600,150 650,120 710,155 770,170 830,215 870,180 908,195',
    20: '42,210 130,240 140,190 170,130 220,165 255,195 320,180 350,145 415,105 450,150 490,175 550,190 620,160 685,185 720,165 760,185 785,110 830,155 860,135 908,165'
  }, mid: 174, amp: 54 },
  { ox: 1020, oy: 390, a: 302, knots: {
    1: '42,350 80,180 145,80 190,130 240,240 300,380 360,540 420,600 510,470 580,350 640,230 690,140 740,75 800,130 850,260 890,400 918,470',
    2: '42,170 60,520 120,590 200,560 280,400 360,250 430,130 500,65 550,130 610,270 680,450 740,590 850,540 918,480',
    3: '42,440 90,350 140,270 190,150 250,110 300,110 360,230 420,360 480,480 560,570 640,540 710,400 750,240 800,150 860,120 918,100',
    4: '42,95 90,180 130,300 180,390 220,490 260,560 340,560 430,510 500,400 570,280 620,170 690,75 740,130 780,220 840,400 880,540 918,610',
    5: '42,545 100,570 200,540 260,420 310,340 370,220 430,130 500,75 550,120 610,250 660,430 720,560 800,590 918,500',
    6: '42,520 90,450 150,320 200,200 270,140 330,110 380,170 430,280 480,440 540,580 590,600 650,530 720,500 800,370 870,230 918,150',
    7: '42,250 80,150 130,110 180,200 230,340 280,430 320,560 370,620 420,590 500,470 550,410 600,300 650,230 700,130 760,90 800,110 830,200 870,310 918,410',
    8: '42,440 70,580 115,630 150,600 200,540 290,440 350,300 400,240 450,170 480,90 530,120 580,220 640,370 690,520 770,620 840,560 918,480',
    9: '42,480 90,400 140,310 200,200 240,110 285,85 320,110 370,210 400,320 440,380 480,500 560,635 620,550 700,480 760,400 800,350 830,220 870,160 918,110',
    10: '42,100 100,180 150,290 190,420 230,570 280,620 350,570 410,510 450,460 510,340 560,240 620,180 670,85 720,110 760,200 800,310 850,520 918,610',
    11: '42,620 80,620 130,570 220,520 260,480 300,420 350,260 410,180 460,125 540,130 590,190 620,280 660,430 700,550 760,620 800,615 850,550 918,520',
    12: '42,525 110,510 150,430 200,330 270,200 340,130 400,130 450,170 500,250 540,370 580,500 630,590 680,625 700,560 740,520 800,520 860,500 918,350',
    13: '42,330 80,260 130,190 190,140 260,135 320,170 370,260 420,370 460,480 500,560 560,605 610,560 660,520 720,540 780,470 830,350 880,170 918,130',
    14: '42,230 80,160 120,135 170,120 240,180 290,270 330,390 390,520 430,580 465,605 510,550 610,545 650,490 700,430 740,340 800,210 850,150 918,95',
    15: '42,105 80,120 130,160 180,230 200,320 240,410 270,510 320,600 360,600 400,570 450,550 500,510 550,430 600,330 660,240 720,160 770,130 810,95 850,100 918,200',
    16: '42,110 80,220 110,340 130,430 160,540 210,630 240,655 290,580 340,520 390,450 470,370 510,270 550,180 640,110 690,125 740,170 780,290 815,400 850,540 890,610 918,605',
    17: '42,605 80,545 150,545 220,490 270,390 320,290 380,190 430,120 480,95 530,100 570,190 610,290 650,400 690,500 740,560 785,605 850,570 918,525',
    18: '42,510 80,440 150,370 200,240 270,170 350,95 400,120 440,190 480,280 540,430 560,520 600,555 650,570 700,530 750,490 800,470 850,400 880,290 918,200',
    19: '42,200 80,120 130,105 170,130 220,180 270,240 310,310 335,430 365,540 410,635 440,570 500,530 540,500 560,440 600,370 650,300 690,220 740,180 790,120 825,85 870,150 918,225',
    20: '42,160 60,270 95,350 120,440 150,545 170,615 205,635 250,580 310,540 355,480 365,410 430,350 465,230 500,160 540,115 575,98 620,135 655,190 700,290 740,400 775,490 785,545 835,550 875,600 918,540'
  } }
];
const px = i => 157.8 + (i - 1) * 2.917;
const py = v => 486 - v * 86.7;
// Cubic interpolation with flat tangents at the turning points.
function slope(p, k) {
  if (k === 0 || k === p.length - 1) return 0;
  const l = (p[k][1] - p[k - 1][1]) / (p[k][0] - p[k - 1][0]);
  const r = (p[k + 1][1] - p[k][1]) / (p[k + 1][0] - p[k][0]);
  return l * r <= 0 ? 0 : 2 * l * r / (l + r);
}
function at(p, x) {
  if (x <= p[0][0]) return p[0][1];
  for (let k = 1; k < p.length; k++) {
    if (x <= p[k][0]) {
      const h = p[k][0] - p[k - 1][0], t = (x - p[k - 1][0]) / h, u = 1 - t;
      return p[k - 1][1] * (1 + 2 * t) * u * u + p[k][1] * t * t * (3 - 2 * t) +
        h * (slope(p, k - 1) * t * u * u - slope(p, k) * t * t * u);
    }
  }
  return p[p.length - 1][1];
}
let seed = 7;
const rnd = () => (seed = (seed * 16807) % 2147483647) / 2147483647;
function sampleSeries(n) {
  const pts = [[px(1), py(2)]];
  stages.forEach(st => {
    const src = st.knots[n];
    const ks = src && src.split(' ').map(p => p.split(',').map(Number)).map(([x, y]) => [st.ox + x / 3, st.oy + y / 3]);
    for (let i = st.a; i < st.a + 100 && i <= 401; i++) {
      const x = px(i);
      const y = ks ? at(ks, x) : st.oy + (st.mid + st.amp * Math.sin(i / 8 + n * 2.1) + 18 * Math.sin(i / 3.1 + n)) / 3;
      pts.push([x, y + (rnd() - .5) * 1.4]);
    }
  });
  return pts;
}
let svg = '<rect x="120.500" y="218.500" width="1221" height="503" fill="#fff" stroke="#d4d6da"/>' +
  '<rect x="118.500" y="216.500" width="1225" height="508" fill="none" stroke="#33353b"/>' +
  '<text class="title" x="731" y="246">图表标题</text>';
for (let v = 2.5; v >= -2; v -= .5) {
  const y = Math.round(py(v)) + .5;
  svg += `<path d="M157 ${y}H1326" stroke="#d9d9d9"/><text class="val" x="148" y="${y + 3.5}">${v}</text>`;
}
colors.forEach((c, k) => {
  const pts = sampleSeries(k + 1).map(p => p.map(q => q.toFixed(1)).join(' '));
  svg += `<path d="M${pts.join('L')}" fill="none" stroke="${c}" stroke-width="2.600" stroke-linejoin="round"/>` +
    `<path d="${pts.map(p => 'M' + p + 'h.01').join('')}" stroke="${c}" stroke-width="7.800" stroke-linecap="round"/>`;
});
for (let i = 1; i <= 401; i += 5) {
  svg += `<text class="val" transform="translate(${(px(i) + 4).toFixed(1)} 493.500) rotate(-90)">${i}</text>`;
}
colors.forEach((c, k) => {
  const x = 378 + (k % 10) * 71, y = 685 + Math.floor(k / 10) * 18;
  svg += `<path d="M${x + 1.500} ${y}h26" stroke="${c}" stroke-width="2.800" stroke-linecap="round"/><circle cx="${x + 14.500}" cy="${y}" r="4" fill="${c}"/>` +
    `<text class="leg" x="${x + 31.500}" y="${y + 4.500}">系列${k + 1}</text>`;
});
[118, 730, 1342.500].forEach(x => [216.500, 724].forEach(y => {
  svg += `<circle cx="${x}" cy="${y}" r="5.500" fill="#fff" stroke="#55575c" stroke-width="1.200"/>`;
}));
document.getElementById('chart').innerHTML = svg;
```
